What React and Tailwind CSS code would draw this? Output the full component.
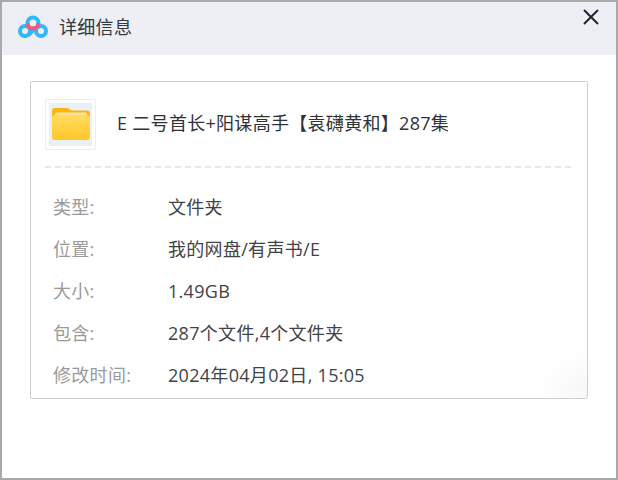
const FONT = "font-['Open_Sans','Noto_Sans_CJK_SC',sans-serif] tracking-[0.3px]"

const rows = [
  { label: '类型:', value: '文件夹' },
  { label: '位置:', value: '我的网盘/有声书/E' },
  { label: '大小:', value: '1.49GB' },
  { label: '包含:', value: '287个文件,4个文件夹' },
  { label: '修改时间:', value: '2024年04月02日, 15:05' },
]

function Logo() {
  return (
    <svg width="30" height="24" viewBox="0 0 30 24" fill="none" className="block">
      <circle cx="7" cy="16" r="5" stroke="#2fb8fb" strokeWidth="4" />
      <circle cx="23" cy="16" r="5" stroke="#2fb8fb" strokeWidth="4" />
      <path d="M10.500 20c3-1.500 4-4.500 5.500-7" stroke="#2fb8fb" strokeWidth="4" />
      <circle cx="15" cy="8" r="5.500" stroke="#2fb8fb" strokeWidth="4" />
      <path d="M9.500 8a5.500 5.500 0 0 0 11 0" stroke="#f9577a" strokeWidth="4" />
    </svg>
  )
}

function FolderIcon() {
  return (
    <svg width="38" height="34" viewBox="0 0 38 34" className="block">
      <defs>
        <linearGradient id="folderFill" x1="0" y1="0" x2="0" y2="1">
          <stop offset="0" stopColor="#ffdc60" />
          <stop offset="1" stopColor="#ffc72b" />
        </linearGradient>
      </defs>
      <path d="M0 4a3 3 0 0 1 3-3h12c2 0 3 2.500 5 2.500h15a3 3 0 0 1 3 3V14H0z" fill="#ffb30f" />
      <rect x="3" y="5.500" width="32" height="5" rx="1.500" fill="#fde3a0" />
      <rect x="0" y="8" width="38" height="25" rx="3" fill="url(#folderFill)" />
    </svg>
  )
}

export default function App() {
  return (
    <div className={`${FONT} w-[618px] h-[480px] bg-white border-2 border-[#a9a9a9] flex flex-col overflow-hidden`}>
      <header className="h-[53px] shrink-0 bg-[#eeeff5] flex items-start justify-between">
        <div className="flex items-center pl-[16px] pt-[13px]">
          <Logo />
          <span className="ml-[11px] text-[18px] leading-6 text-[#33383f]">详细信息</span>
        </div>
        <button className="mt-[7px] mr-[17px] text-[#1c2433]">
          <svg width="16" height="16" viewBox="0 0 16 16" className="block">
            <path d="M1 1l14 14M15 1L1 15" stroke="currentColor" strokeWidth="2" />
          </svg>
        </button>
      </header>

      <section className="mt-[26px] mx-[28px] h-[318px] border border-[#cfcfcf] rounded-[2px] px-[14px] pt-[17px] bg-[radial-gradient(circle_at_100%_100%,#f6f6f6,#ffffff_50px)]">
        <div className="flex items-center h-[50px]">
          <div className="w-[51px] h-[51px] shrink-0 border border-[#eeeeee] rounded-[2px] p-[3px]">
            <div className="w-full h-full bg-[#e9f1f5] flex items-center justify-center">
              <FolderIcon />
            </div>
          </div>
          <div className="ml-[21px] text-[18px] leading-6 pb-[3px] text-[#2f3338] whitespace-nowrap">E 二号首长+阳谋高手【袁礴黄和】287集</div>
        </div>
        <div className="mt-[17px] mr-[2px] border-t-2 border-dashed border-[#e3e9ee]" />
        <div className="mt-[24px] flex flex-col gap-[12px] pl-[8px]">
          {rows.map((row) => (
            <div key={row.label} className="flex items-center h-[30px] text-[18px]">
              <span className="w-[115px] text-[#9a9a9a]">{row.label}</span>
              <span className="text-[#3f4348]">{row.value}</span>
            </div>
          ))}
        </div>
      </section>
    </div>
  )
}
